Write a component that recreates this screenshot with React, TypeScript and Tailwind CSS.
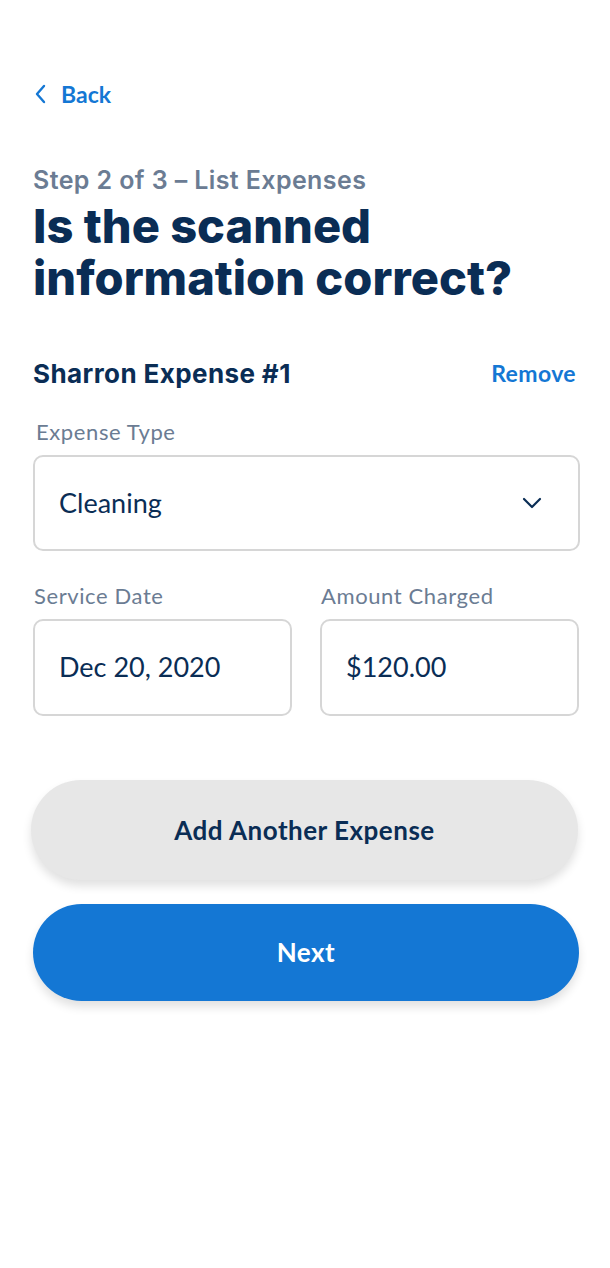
import React from "react";

const head = { fontFamily: "Inter, 'Noto Sans', sans-serif" } as React.CSSProperties;
const body = { fontFamily: "Lato, 'Open Sans', sans-serif" } as React.CSSProperties;

export default function App() {
  return (
    <div className="w-[610px] min-h-[1268px] bg-white" style={body}>
      <div className="pl-[33px] pr-[30px] pt-[80px]">
        <button className="flex items-center gap-[13px] text-[#1477d4] h-[28px]">
          <svg width="14" height="20" viewBox="0 0 14 20" fill="none" className="ml-[1px]">
            <path d="M10 2L3 10L10 18" stroke="#1477d4" strokeWidth="2.4" strokeLinecap="round" strokeLinejoin="round" />
          </svg>
          <span className="text-[23px] font-bold leading-none">Back</span>
        </button>

        <div className="mt-[56px] text-[25px] font-semibold text-[#6b7c93] leading-[32px] tracking-[0.4px]" style={head}>
          Step 2 of 3 – List Expenses
        </div>
        <h1 className="mt-[4px] text-[47px] font-extrabold text-[#0a2d55] leading-[52px] tracking-[0px]" style={head}>
          Is the scanned
          <br />
          information correct?
        </h1>

        <div className="mt-[50px] flex items-center justify-between">
          <span className="text-[26px] font-bold text-[#0a2d55] tracking-[0.4px]" style={head}>
            Sharron Expense #1
          </span>
          <span className="text-[23px] font-bold text-[#1477d4] tracking-[0.4px] mr-[4px]">Remove</span>
        </div>

        <div className="mt-[22px] pl-[3px] text-[22px] text-[#6b7c93] tracking-[0.6px]">Expense Type</div>
        <div className="mt-[7px] h-[96px] rounded-[10px] border-2 border-[#d6d6d6] flex items-center justify-between pl-[24px] pr-[36px]">
          <span className="text-[27px] text-[#0a2d55]">Cleaning</span>
          <svg width="20" height="12" viewBox="0 0 20 12" fill="none">
            <path d="M2 2L10 10L18 2" stroke="#0a2d55" strokeWidth="2.2" strokeLinecap="round" strokeLinejoin="round" />
          </svg>
        </div>

        <div className="mt-[28px] grid grid-cols-2 gap-[28px] pr-[1px]">
          <div>
            <div className="pl-[1px] text-[22px] text-[#6b7c93] tracking-[0.6px]">Service Date</div>
            <div className="mt-[7px] h-[97px] rounded-[10px] border-2 border-[#d6d6d6] flex items-center pl-[24px]">
              <span className="text-[27px] text-[#0a2d55]">Dec 20, 2020</span>
            </div>
          </div>
          <div>
            <div className="pl-[1px] text-[22px] text-[#6b7c93] tracking-[0.6px]">Amount Charged</div>
            <div className="mt-[7px] h-[97px] rounded-[10px] border-2 border-[#d6d6d6] flex items-center pl-[24px]">
              <span className="text-[27px] text-[#0a2d55]">$120.00</span>
            </div>
          </div>
        </div>

        <button className="mt-[64px] -ml-[2px] w-[547px] h-[100px] rounded-full bg-[#e7e7e7] shadow-[0_6px_10px_rgba(0,0,0,0.12)] flex items-center justify-center">
          <span className="text-[26px] font-bold text-[#0a2d55] tracking-[0.5px]">Add Another Expense</span>
        </button>

        <button className="mt-[24px] w-[546px] h-[97px] rounded-full bg-[#1477d4] shadow-[0_6px_10px_rgba(0,0,0,0.12)] flex items-center justify-center">
          <span className="text-[26px] font-bold text-white tracking-[0.5px]">Next</span>
        </button>
      </div>
    </div>
  );
}
